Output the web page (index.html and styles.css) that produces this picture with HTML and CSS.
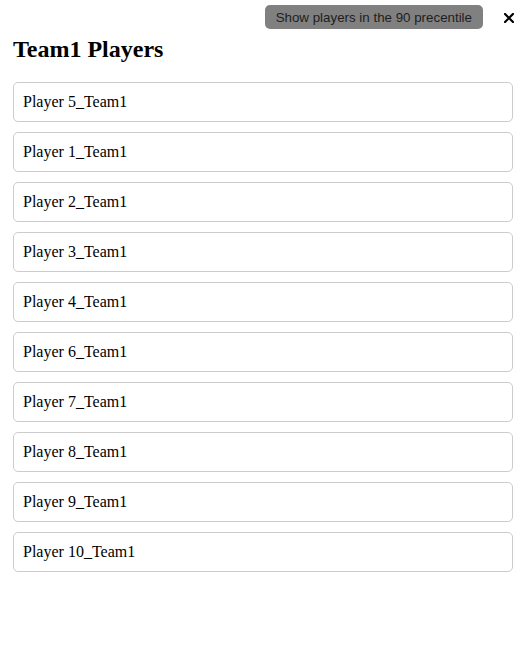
FILE: index.html
```html
<!DOCTYPE html>
<html>
<head>
<meta charset="utf-8">
<link rel="stylesheet" href="styles.css">
</head>
<body>
<div class="panel">
  <div class="topbar">
    <button class="filter-btn">Show players in the 90 precentile</button>
    <button class="close-btn" aria-label="Close">
      <svg width="10" height="10" viewBox="0 0 10 10"><path d="M1 1L9 9M9 1L1 9" stroke="#000" stroke-width="2.2" stroke-linecap="square" fill="none"/></svg>
    </button>
  </div>
  <h2 class="title">Team1 Players</h2>
  <ul class="player-list">
    <li class="player">Player 5_Team1</li>
    <li class="player">Player 1_Team1</li>
    <li class="player">Player 2_Team1</li>
    <li class="player">Player 3_Team1</li>
    <li class="player">Player 4_Team1</li>
    <li class="player">Player 6_Team1</li>
    <li class="player">Player 7_Team1</li>
    <li class="player">Player 8_Team1</li>
    <li class="player">Player 9_Team1</li>
    <li class="player">Player 10_Team1</li>
  </ul>
</div>
</body>
</html>
```
FILE: styles.css
```css
html, body {
  margin: 0;
  padding: 0;
  background: #fff;
}
body {
  font-family: "Liberation Serif", "Times New Roman", serif;
  color: #000;
}
.panel {
  padding: 5px 11px 0 13px;
}
.topbar {
  display: flex;
  justify-content: flex-end;
  align-items: center;
  height: 24px;
}
.filter-btn {
  font-family: "Liberation Sans", Arial, sans-serif;
  font-size: 13.333px;
  color: #1e1e1e;
  background: #808080;
  border: none;
  border-radius: 5px;
  height: 24px;
  padding: 0 11px;
  margin: 0;
  cursor: pointer;
}
.close-btn {
  background: none;
  border: none;
  padding: 0;
  margin: 2px 0 0 21px;
  width: 10px;
  height: 10px;
  display: flex;
}
.title {
  font-size: 24px;
  font-weight: bold;
  margin: 7px 0 0 0;
  line-height: 27px;
}
.player-list {
  list-style: none;
  margin: 19px 1px 0 0;
  padding: 0;
  display: flex;
  flex-direction: column;
  gap: 10px;
}
.player {
  border: 1px solid #cccccc;
  border-radius: 5px;
  height: 38px;
  line-height: 38px;
  padding: 0 9px;
  font-size: 16px;
}
```
